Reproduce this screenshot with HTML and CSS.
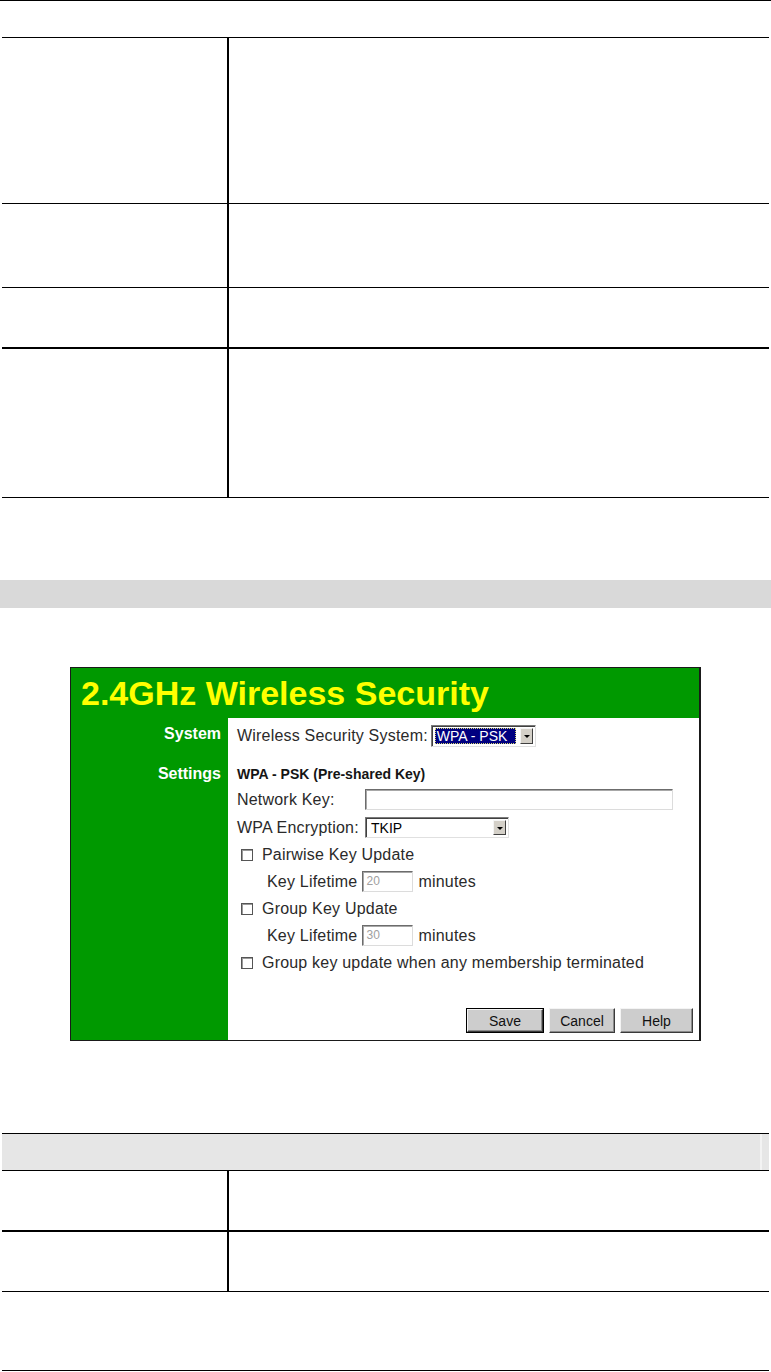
FILE: index.html
```html
<!DOCTYPE html>
<html lang="en">
<head>
<meta charset="utf-8">
<title>2.4GHz Wireless Security</title>
<link rel="stylesheet" href="styles.css">
</head>
<body>
<div class="page">
  <div class="spec t1">
    <div class="row h165"><div class="c-l"></div><div class="c-r"></div></div>
    <div class="row h83"><div class="c-l"></div><div class="c-r"></div></div>
    <div class="row h59 thick"><div class="c-l"></div><div class="c-r"></div></div>
    <div class="row h148"><div class="c-l"></div><div class="c-r"></div></div>
  </div>

  <div class="band"></div>

  <div class="panel">
    <div class="p-title">2.4GHz Wireless Security</div>
    <div class="p-body">
      <div class="p-row sys">
        <div class="p-label">System</div>
        <div class="p-cell">
          <span class="txt">Wireless Security System:</span>
          <span class="select sel-sys"><span class="sel-val hl">WPA - PSK</span><span class="sel-btn"></span></span>
        </div>
      </div>
      <div class="p-row set">
        <div class="p-label lbl-set">Settings</div>
        <div class="p-cell col">
          <div class="heading">WPA - PSK (Pre-shared Key)</div>
          <div class="f-row net">
            <span class="txt flab">Network Key:</span>
            <span class="input key"></span>
          </div>
          <div class="f-row">
            <span class="txt flab">WPA Encryption:</span>
            <span class="select sel-enc"><span class="sel-val">TKIP</span><span class="sel-btn"></span></span>
          </div>
          <div class="f-row chk-row">
            <span class="chk"></span><span class="txt">Pairwise Key Update</span>
          </div>
          <div class="f-row sub">
            <span class="txt">Key Lifetime</span>
            <span class="input life">20</span>
            <span class="txt">minutes</span>
          </div>
          <div class="f-row chk-row">
            <span class="chk"></span><span class="txt">Group Key Update</span>
          </div>
          <div class="f-row sub">
            <span class="txt">Key Lifetime</span>
            <span class="input life">30</span>
            <span class="txt">minutes</span>
          </div>
          <div class="f-row chk-row">
            <span class="chk"></span><span class="txt">Group key update when any membership terminated</span>
          </div>
          <div class="btns">
            <span class="btn default"><span class="btn-face w78">Save</span></span>
            <span class="btn"><span class="btn-face w66">Cancel</span></span>
            <span class="btn"><span class="btn-face w73">Help</span></span>
          </div>
        </div>
      </div>
    </div>
  </div>

  <div class="spec t2">
    <div class="head"><div class="head-main"></div><div class="head-end"></div></div>
    <div class="row h59 thick"><div class="c-l"></div><div class="c-r"></div></div>
    <div class="row h59"><div class="c-l"></div><div class="c-r"></div></div>
  </div>

  <div class="foot-rule"></div>
</div>
</body>
</html>
```

FILE: styles.css
```css
* { box-sizing: border-box; }

html, body {
  margin: 0;
  padding: 0;
  background: #ffffff;
}

body {
  font-family: "Liberation Sans", Arial, sans-serif;
  color: #000;
}

.page {
  width: 771px;
  border-top: 1px solid #000;
}

/* document tables */
.spec {
  margin: 0 2px;
  border-top: 1px solid #000;
}

.t1 { margin-top: 36px; }
.t2 { margin-top: 92px; }

.row {
  display: grid;
  grid-template-columns: 227px 1fr;
  border-bottom: 1px solid #000;
}

.row.thick { border-bottom-width: 2px; }

.row .c-l { border-right: 2px solid #000; }

.h165 { height: 166px; }
.h83 { height: 84px; }
.h59 { height: 60px; }
.h148 { height: 149px; }

.row.thick.h59 { height: 61px; }

.head {
  display: grid;
  grid-template-columns: 1fr 9px;
  height: 37px;
  border-bottom: 1px solid #000;
  background: #e6e6e6;
}

.head-end { border-left: 2px solid #f3f3f3; }

.band {
  margin-top: 82px;
  height: 28px;
  background: #d9d9d9;
}

.foot-rule {
  margin: 78px 2px 0;
  border-top: 1px solid #000;
}

/* screenshot panel */
.panel {
  width: 631px;
  height: 374px;
  margin: 59px auto 0;
  background: #009900;
  border: 1px solid #1a1a1a;
  border-right-width: 2px;
  display: flex;
  flex-direction: column;
}

.p-title {
  height: 50px;
  display: flex;
  align-items: center;
  padding-left: 10px;
  color: #ffff00;
  font-weight: bold;
  font-size: 34px;
  white-space: nowrap;
}

.p-body {
  flex: 1;
  display: flex;
  flex-direction: column;
}

.p-row { display: flex; }

.p-row.sys { height: 31px; }
.p-row.set { flex: 1; }

.p-label {
  width: 157px;
  flex: none;
  text-align: right;
  padding-right: 7px;
  padding-top: 7px;
  color: #ffffff;
  font-weight: bold;
  font-size: 16px;
  line-height: 18px;
}

.p-label.lbl-set { padding-top: 16px; }

.p-cell {
  flex: 1;
  background: #ffffff;
  padding-left: 9px;
  padding-top: 7px;
  display: flex;
  align-items: flex-start;
}

.p-cell.col {
  flex-direction: column;
  padding-top: 16px;
  padding-right: 6px;
  padding-bottom: 7px;
}

.txt {
  font-size: 16px;
  line-height: 18px;
  letter-spacing: 0.2px;
  color: #2a2a2a;
  white-space: nowrap;
}

.sys .txt { margin-top: 2px; margin-right: 3px; }

.heading {
  font-size: 14px;
  font-weight: bold;
  line-height: 18px;
  color: #151515;
}

.f-row {
  display: flex;
  align-items: center;
  height: 27px;
  width: 100%;
}

.f-row.net { height: 29px; margin-top: 2px; }

.flab { width: 128px; flex: none; }

.chk-row { padding-left: 4px; }

.chk {
  width: 12px;
  height: 12px;
  flex: none;
  border: 1px solid #555;
  box-shadow: inset 1px 1px 0 #9a9a9a;
  background: #fff;
  margin-right: 9px;
}

.sub { padding-left: 30px; }

.input {
  display: inline-block;
  height: 21px;
  border: 1px solid;
  border-color: #6c6c6c #dcdcdc #dcdcdc #6c6c6c;
  box-shadow: inset 1px 1px 0 #a8a8a8;
  background: #fff;
}

.input.key { width: 308px; }

.input.life {
  width: 51px;
  margin: 0 5px 0 5px;
  font-size: 12px;
  line-height: 19px;
  color: #a0a0a0;
  padding-left: 3px;
}

.select {
  display: inline-flex;
  align-items: stretch;
  border: 1px solid;
  border-color: #7a7a7a #e0e0e0 #e0e0e0 #7a7a7a;
  box-shadow: inset 1px 1px 0 #404040;
  background: #fff;
  padding: 2px 2px 2px 3px;
}

.sel-sys { width: 105px; height: 22px; }
.sel-enc { width: 144px; height: 21px; }

.sel-val {
  flex: 1;
  font-size: 14px;
  line-height: 16px;
  color: #000;
  padding-left: 2px;
  white-space: nowrap;
}

.sel-val.hl {
  background: #000080;
  color: #ffffff;
  outline: 1px dotted #d8d870;
  outline-offset: -1px;
  margin-right: 4px;
}

.sel-btn {
  width: 13px;
  flex: none;
  background: #d4d0c8;
  border: 1px solid;
  border-color: #f4f4f4 #404040 #404040 #f4f4f4;
  position: relative;
}

.sel-btn::after {
  content: "";
  position: absolute;
  left: 3px;
  top: 6px;
  border-left: 3px solid transparent;
  border-right: 3px solid transparent;
  border-top: 3px solid #000;
}

.btns {
  margin-top: auto;
  align-self: flex-end;
  display: flex;
  gap: 5px;
}

.btn {
  display: inline-block;
  height: 25px;
}

.btn.default {
  border: 1px solid #000;
}

.btn-face {
  display: flex;
  align-items: center;
  justify-content: center;
  height: 100%;
  background: #cdcdcd;
  border: 1px solid;
  border-color: #f4f4f4 #3a3a3a #3a3a3a #f4f4f4;
  box-shadow: inset -1px -1px 0 #8a8a8a;
  font-size: 14px;
  color: #111;
}

.btn.default .btn-face { height: 23px; }

.w78 { width: 78px; }
.btn.default .w78 { width: 76px; }
.w66 { width: 66px; }
.w73 { width: 73px; }
```
